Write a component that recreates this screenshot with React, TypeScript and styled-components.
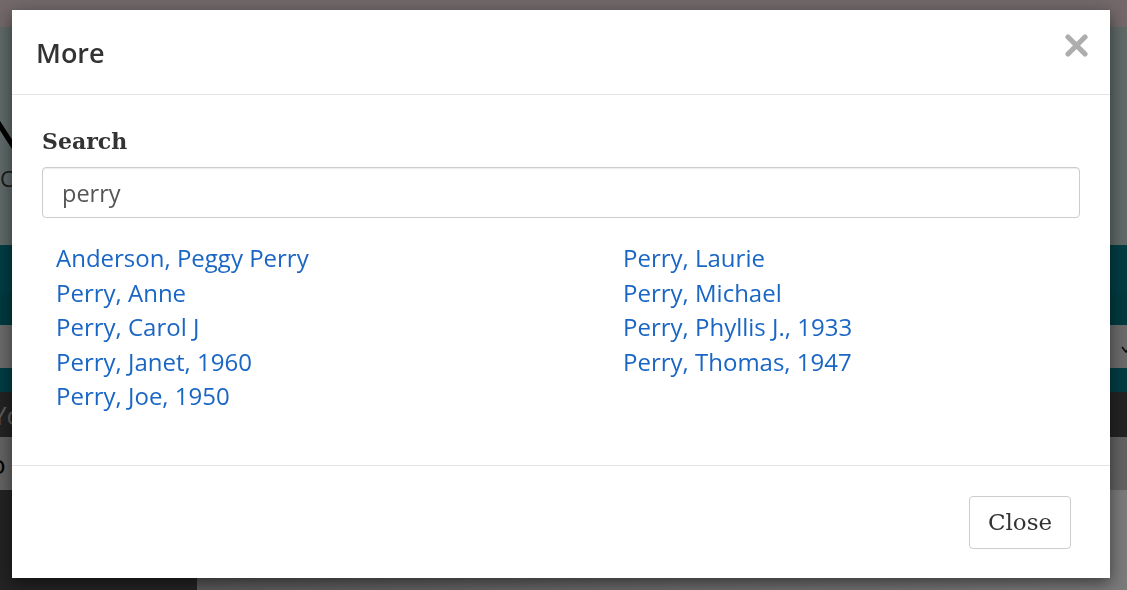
import React from "react";
import styled, { createGlobalStyle } from "styled-components";

const Global = createGlobalStyle`
  html, body { margin: 0; padding: 0; }
  body { width: 1127px; height: 590px; overflow: hidden; font-family: "Open Sans", "Liberation Sans", sans-serif; }
  * { box-sizing: border-box; }
`;

const Page = styled.div`
  width: 1127px;
  height: 590px;
  display: flex;
  flex-direction: column;
  overflow: hidden;
`;

const Band = styled.div<{ $h: number; $bg: string }>`
  height: ${(p) => p.$h}px;
  flex: none;
  background: ${(p) => p.$bg};
  display: flex;
  align-items: center;
  justify-content: space-between;
  overflow: hidden;
`;

const BrandBlock = styled.div`
  display: flex;
  flex-direction: column;
  margin-left: -20px;
  margin-top: 20px;
`;

const BrandLetter = styled.div`
  font-family: "Open Sans", sans-serif;
  font-size: 64px;
  line-height: 1;
  color: #000;
`;

const BrandSub = styled.div`
  font-family: "Open Sans", sans-serif;
  font-size: 22px;
  letter-spacing: 4px;
  color: #333;
  margin-left: 20px;
`;

const DarkText = styled.div`
  font-family: "Open Sans", sans-serif;
  font-size: 26px;
  color: #bbb;
  margin-left: -8px;
`;

const GreyText = styled.div`
  font-family: "Open Sans", sans-serif;
  font-size: 26px;
  color: #000;
  margin-left: -10px;
`;

const Chevron = styled.span`
  margin-right: -4px;
  margin-top: 6px;
  display: flex;
`;

const Bottom = styled.div`
  flex: 1;
  display: flex;
`;

const BottomLeft = styled.div`
  width: 197px;
  background: #464646;
`;

const BottomRight = styled.div`
  flex: 1;
  background: linear-gradient(90deg, #b4b4b4, #f4f4f4);
`;

const Overlay = styled.div`
  position: fixed;
  inset: 0;
  background: rgba(0, 0, 0, 0.5);
`;

const Modal = styled.div`
  position: fixed;
  left: 12px;
  top: 10px;
  width: 1098px;
  height: 568px;
  background: #fff;
  box-shadow: 0 5px 15px rgba(0, 0, 0, 0.5);
  display: flex;
  flex-direction: column;
`;

const Header = styled.div`
  height: 85px;
  border-bottom: 1px solid #e5e5e5;
  display: flex;
  align-items: center;
  justify-content: space-between;
  padding: 0 22px 0 24px;
  flex: none;
`;

const Title = styled.h4`
  margin: 0;
  font-family: "Open Sans", sans-serif;
  font-weight: 600;
  font-size: 27px;
  color: #333;
`;

const CloseX = styled.button`
  border: 0;
  background: none;
  padding: 0;
  margin-bottom: 14px;
  width: 23px;
  height: 23px;
  cursor: pointer;
  display: flex;
`;

const Body = styled.div`
  flex: 1;
  padding: 30px 30px 0 30px;
  display: flex;
  flex-direction: column;
`;

const Label = styled.label`
  font-family: "DejaVu Serif", "Liberation Serif", serif;
  font-weight: bold;
  font-size: 22px;
  color: #333;
  line-height: 32px;
  margin-bottom: 10px;
`;

const Input = styled.input`
  height: 51px;
  width: 100%;
  border: 1px solid #ccc;
  border-radius: 4px;
  padding: 0 19px;
  font-family: "Open Sans", sans-serif;
  font-size: 23.5px;
  color: #555;
  box-shadow: inset 0 1px 1px rgba(0, 0, 0, 0.075);
  outline: none;
`;

const Results = styled.div`
  display: grid;
  grid-template-columns: 567px 1fr;
  padding: 23px 0 0 14px;
`;

const Column = styled.ul`
  list-style: none;
  margin: 0;
  padding: 0;
`;

const Item = styled.li`
  line-height: 34.5px;
  font-size: 24px;
`;

const Link = styled.a`
  color: #1a66c4;
  text-decoration: none;
`;

const Footer = styled.div`
  height: 113px;
  border-top: 1px solid #e5e5e5;
  display: flex;
  align-items: center;
  justify-content: flex-end;
  padding: 0 39px 0 0;
  flex: none;
`;

const Button = styled.button`
  width: 102px;
  height: 53px;
  border: 1px solid #ccc;
  border-radius: 4px;
  background: #fff;
  font-family: "DejaVu Serif", "Liberation Serif", serif;
  font-size: 23px;
  color: #333;
  cursor: pointer;
`;

const left = [
  "Anderson, Peggy Perry",
  "Perry, Anne",
  "Perry, Carol J",
  "Perry, Janet, 1960",
  "Perry, Joe, 1950",
];
const right = [
  "Perry, Laurie",
  "Perry, Michael",
  "Perry, Phyllis J., 1933",
  "Perry, Thomas, 1947",
];

export default function App() {
  return (
    <>
      <Global />
      <Page>
        <Band $h={27} $bg="#e4d0d4" />
        <Band $h={218} $bg="#bed2d0">
          <BrandBlock>
            <BrandLetter>N</BrandLetter>
            <BrandSub>C</BrandSub>
          </BrandBlock>
        </Band>
        <Band $h={48} $bg="#007a84" />
        <Band $h={32} $bg="#00747e" />
        <Band $h={43} $bg="#d4d4d4">
          <span />
          <Chevron>
            <svg width="10" height="8" viewBox="0 0 10 8">
              <path d="M1 1 L5 6 L9 1" stroke="#111" strokeWidth="1.6" fill="none" />
            </svg>
          </Chevron>
        </Band>
        <Band $h={24} $bg="#007a84" />
        <Band $h={45} $bg="#464646">
          <DarkText>Yo</DarkText>
        </Band>
        <Band $h={53} $bg="#c4c4c4">
          <GreyText>o</GreyText>
        </Band>
        <Bottom>
          <BottomLeft />
          <BottomRight />
        </Bottom>
      </Page>
      <Overlay />
      <Modal role="dialog">
        <Header>
          <Title>More</Title>
          <CloseX aria-label="Close">
            <svg width="23" height="23" viewBox="0 0 23 23">
              <path d="M3 3 L20 20 M20 3 L3 20" stroke="#adadad" strokeWidth="5.2" strokeLinecap="round" />
            </svg>
          </CloseX>
        </Header>
        <Body>
          <Label>Search</Label>
          <Input defaultValue="perry" />
          <Results>
            <Column>
              {left.map((n) => (
                <Item key={n}>
                  <Link href="#">{n}</Link>
                </Item>
              ))}
            </Column>
            <Column>
              {right.map((n) => (
                <Item key={n}>
                  <Link href="#">{n}</Link>
                </Item>
              ))}
            </Column>
          </Results>
        </Body>
        <Footer>
          <Button>Close</Button>
        </Footer>
      </Modal>
    </>
  );
}
